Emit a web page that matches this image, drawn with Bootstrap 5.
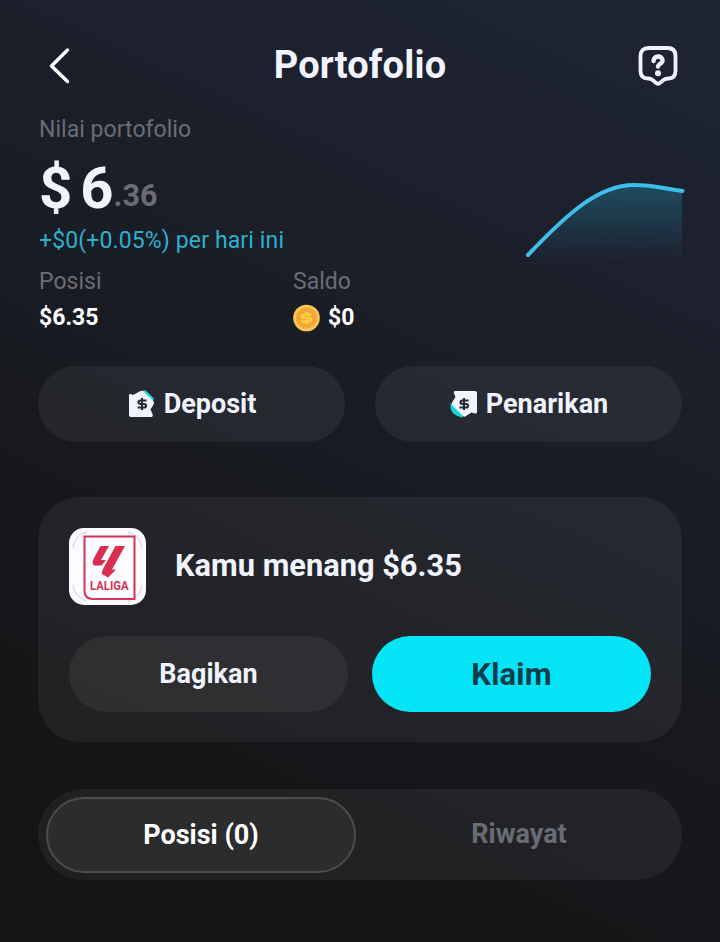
<!DOCTYPE html>
<html lang="id">
<head>
<meta charset="utf-8">
<meta name="viewport" content="width=device-width, initial-scale=1">
<title>Portofolio</title>
<link rel="stylesheet" href="https://cdn.jsdelivr.net/npm/bootstrap@5.3.0/dist/css/bootstrap.min.css">
<style>
body{font-family:Roboto,"Liberation Sans",sans-serif;color:#f1f3fe;background:#151515;}
.screen{width:720px;height:942px;padding:20px 38px 0;overflow:hidden;
  background:linear-gradient(205deg,#1e2433 0%,#1c202c 25%,#191c24 44%,#16171b 68%,#141414 90%);}
.topbar{height:90px;}
.topbar svg{flex:none;display:block;}
.title{font-size:38px;line-height:90px;font-weight:700;letter-spacing:.15px;}
.summary{padding-top:2px;}
.muted{color:#6a6c75;}
.line36{font-size:23px;line-height:36px;letter-spacing:.03px;}
.amounts{padding-left:1px;}
.worth{height:81px;line-height:81px;font-size:58px;font-weight:700;}
.worth .cents{font-size:30.500px;position:relative;top:-2px;color:#6a6c75;}
.gain{font-size:23px;line-height:24px;letter-spacing:.13px;color:#2bb0d0;margin-bottom:11px;}
.value{font-weight:700;color:#fff;font-size:23px;line-height:36px;}
.cell{width:254px;}
.trend{margin-top:46px;}
.pill{height:76px;border:0;border-radius:38px;background:rgba(255,255,255,.06);color:#f1f3fe;font-size:27px;font-weight:700;}
.pill:hover{background:rgba(255,255,255,.09);color:#fff;}
.actions{margin-top:30px;gap:30px;}
.actions .pill{padding-left:1px !important;}
.win{margin-top:55px;height:245px;border-radius:42px;background:rgba(255,255,255,.055);padding:31px 31px 0;}
.win-text{font-size:30.800px;font-weight:700;margin-left:29px;line-height:75px;margin-bottom:2px;}
.win-actions{margin-top:31px;gap:24px;}
.claim{background:#06e4f8;color:#0d3e4c;font-size:31px;letter-spacing:.2px;padding-top:2px !important;}
.claim:hover{background:#3becfb;color:#0d3e4c;}
.tabs{margin-top:47px;height:91px;border-radius:46px;background:rgba(255,255,255,.055);padding:8px;font-size:27px;font-weight:700;}
.tab-on{width:310px;height:76px;border-radius:38px;border:2px solid #4b4c4f;background:#2b2c2e;color:#fff;}
.tab-off{padding-left:8px;}
</style>
<script src="https://cdn.jsdelivr.net/npm/bootstrap@5.3.0/dist/js/bootstrap.bundle.min.js"></script>
</head>
<body>
<main class="screen">
  <header class="topbar d-flex align-items-center justify-content-between">
    <svg width="44" height="44" viewBox="0 0 44 44" fill="none"><path d="M29.500 7 13.500 23 29.500 38.500" stroke="#fff" stroke-width="3.400" stroke-linecap="round" stroke-linejoin="round"/></svg>
    <h1 class="title m-0">Portofolio</h1>
    <svg width="44" height="44" viewBox="0 0 44 44" fill="none" stroke="#eef2fe" stroke-linecap="round" stroke-linejoin="round"><path d="M10.500 5H29.500Q37.500 5 37.500 13V28Q37.500 35.500 30.500 35.500Q27.500 35.500 25.500 37L21.500 40.200Q20 41.200 18.500 40.200L14.500 37Q13 35.500 10 35.500Q2.500 35.500 2.500 28V13Q2.500 5 10.500 5Z" stroke-width="3.800"/><path d="M15.500 18C15.500 12 24.500 12 24.500 17.500C24.500 21 20 20.500 20 23.500" stroke-width="4.400"/><circle cx="20" cy="30.200" r="3" fill="#eef2fe" stroke="none"/></svg>
  </header>

  <section class="summary d-flex justify-content-between">
    <div class="amounts">
      <div class="line36 muted">Nilai portofolio</div>
      <div class="worth"><span>$</span><span class="ms-2">6</span><span class="cents">.36</span></div>
      <div class="gain">+$0(+0.05%) per hari ini</div>
      <div class="d-flex">
        <div class="cell">
          <div class="line36 muted">Posisi</div>
          <div class="value">$6.35</div>
        </div>
        <div>
          <div class="line36 muted">Saldo</div>
          <div class="value d-flex align-items-center">
            <svg class="me-2" width="27" height="28" viewBox="0 0 28 28"><circle cx="14" cy="14" r="13.800" fill="#f9c851"/><circle cx="14" cy="14" r="11" fill="#f0a63b"/><path d="M19 10.500H11.500Q9.200 10.500 9.200 12.200T11.500 14H16.500Q18.800 14 18.800 15.800T16.500 17.500H9M14 7.500V10.500M14 17.500V20.500" fill="none" stroke="#ffd23f" stroke-width="2.400"/></svg>
            <span>$0</span>
          </div>
        </div>
      </div>
    </div>
    <svg class="trend flex-shrink-0 overflow-visible" width="160" height="110" viewBox="0 0 160 110" fill="none">
      <defs><linearGradient id="area" x1="0" y1="25" x2="0" y2="104" gradientUnits="userSpaceOnUse"><stop offset="0" stop-color="#219bbd" stop-opacity=".36"/><stop offset="1" stop-color="#219bbd" stop-opacity="0"/></linearGradient></defs>
      <path d="M6 97C44 57 76 27 112 27C130 27 140 30 160 33V104H6Z" fill="url(#area)"/>
      <path d="M6 97C44 57 76 27 112 27C130 27 140 30 160.500 33" stroke="#3dbfea" stroke-width="4" stroke-linecap="round"/>
    </svg>
  </section>

  <div class="actions d-flex">
    <button class="btn pill flex-fill w-50 p-0 d-flex align-items-center justify-content-center">
      <svg class="me-2" width="28" height="28" viewBox="0 0 28 28"><path d="M15 .5Q17-.3 19 1.500L26 8.500 24 12 14 2Z" fill="#20d4d6"/><path d="M1 5Q1 3.500 2.500 4L5 5 12.500 1Q14 .2 15.500 1.500L24.500 10Q27 12.500 25.300 15L22.500 19.500 24.500 24Q25.500 27 23 27H3Q1 27 1 25Z" fill="#f1f3fe"/><path d="M18.500 10.500H12.500Q10.500 10.500 10.500 12.200T12.500 14H16Q18 14 18 15.800T16 17.500H9.500M14 8V20" fill="none" stroke="#262a33" stroke-width="2.100"/></svg>
      <span>Deposit</span>
    </button>
    <button class="btn pill flex-fill w-50 p-0 d-flex align-items-center justify-content-center">
      <svg class="me-2" width="28" height="28" viewBox="0 0 28 28"><path d="M.5 13V18Q2 25.500 12 27.500L17 23Z" fill="#20d4d6"/><path d="M5 1H25Q27 1 27 3V22Q27 24 25 23.500L21.500 22.500 16 26Q14 27.500 12.500 25.500L3 16Q1 14 2.500 11.500L5.500 7 4 3.500Q3.200 1 5 1Z" fill="#f1f3fe"/><path d="M18.500 10.500H12.500Q10.500 10.500 10.500 12.200T12.500 14H16Q18 14 18 15.800T16 17.500H9.500M14 8V20" fill="none" stroke="#262a33" stroke-width="2.100"/></svg>
      <span>Penarikan</span>
    </button>
  </div>

  <section class="win">
    <div class="d-flex align-items-center">
      <svg width="77" height="77" viewBox="0 0 77 77"><rect width="77" height="77" rx="15" fill="#fcfbff"/>
        <path d="M4 20Q5 7 18 4M59 4Q71 7 73 20M4 57Q6 69 17 73M59 73Q71 70 73 57" fill="none" stroke="#b9b9c2" stroke-width=".7"/>
        <path d="M15.500 8.500H65.500V71H24Q15.500 71 15.500 62.500Z" fill="none" stroke="#d43555" stroke-width="2"/>
        <path d="M31.500 18H40L32 32H37L32.500 37.500H25Q22.500 36 24.500 31ZM46.500 18H56L43 41.500H47L39 49.500 33 46Q32.500 44 34 41Z" fill="#d92e50"/>
        <text x="21" y="62" textLength="38.500" lengthAdjust="spacingAndGlyphs" font-family="Roboto, sans-serif" font-size="12.500" font-weight="700" fill="#d43555">LALIGA</text></svg>
      <div class="win-text">Kamu menang $6.35</div>
    </div>
    <div class="win-actions d-flex">
      <button class="btn pill flex-fill w-50 p-0">Bagikan</button>
      <button class="btn pill claim flex-fill w-50 p-0">Klaim</button>
    </div>
  </section>

  <nav class="tabs d-flex">
    <div class="tab-on d-flex align-items-center justify-content-center">Posisi (0)</div>
    <div class="tab-off flex-fill d-flex align-items-center justify-content-center muted">Riwayat</div>
  </nav>
</main>
</body>
</html>
